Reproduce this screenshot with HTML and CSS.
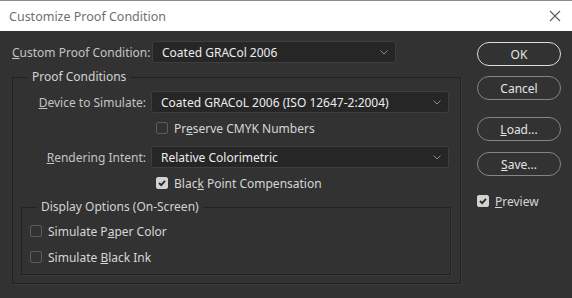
FILE: index.html
```html
<!DOCTYPE html>
<html lang="en">
<head>
    <meta charset="UTF-8">
    <title>Customize Proof Condition</title>
    <link rel="stylesheet" href="styles.css">
</head>
<body>
    <div class="dialog">
        <div class="titlebar">
            <span class="title">Customize Proof Condition</span>
            <svg class="close" width="12" height="12" viewBox="0 0 12 12">
                <path d="M1 1 L11 11 M11 1 L1 11" stroke="#5a5a5a" stroke-width="1.1" fill="none"/>
            </svg>
        </div>

        <div class="main">
            <div class="left">
                <div class="top-row">
                    <span class="label"><u>C</u>ustom Proof Condition:</span>
                    <div class="select select-top">
                        <span>Coated GRACol 2006</span>
                        <svg width="8" height="5" viewBox="0 0 8 5"><path d="M0.5 0.5 L4 4 L7.5 0.5" stroke="#8c8c8c" fill="none"/></svg>
                    </div>
                </div>

                <fieldset class="group outer">
                    <legend>Proof Conditions</legend>
                    <div class="form-grid">
                        <span class="label right"><u>D</u>evice to Simulate:</span>
                        <div class="select">
                            <span>Coated GRACoL 2006 (ISO 12647-2:2004)</span>
                            <svg width="8" height="5" viewBox="0 0 8 5"><path d="M0.5 0.5 L4 4 L7.5 0.5" stroke="#8c8c8c" fill="none"/></svg>
                        </div>
                        <span></span>
                        <label class="check check-row1"><span class="box"></span><span>Pr<u>e</u>serve CMYK Numbers</span></label>
                        <span class="label right"><u>R</u>endering Intent:</span>
                        <div class="select">
                            <span>Relative Colorimetric</span>
                            <svg width="8" height="5" viewBox="0 0 8 5"><path d="M0.5 0.5 L4 4 L7.5 0.5" stroke="#8c8c8c" fill="none"/></svg>
                        </div>
                        <span></span>
                        <label class="check check-row2"><span class="box checked"><svg width="10" height="10" viewBox="0 0 10 10"><path d="M2 5 L4.2 7.2 L8 2.8" stroke="#2b2b2b" stroke-width="1.8" fill="none"/></svg></span><span>Blac<u>k</u> Point Compensation</span></label>
                    </div>

                    <fieldset class="group inner">
                        <legend>Display Options (On-Screen)</legend>
                        <label class="check"><span class="box"></span><span>Simulate P<u>a</u>per Color</span></label>
                        <label class="check second"><span class="box"></span><span>Simulate <u>B</u>lack Ink</span></label>
                    </fieldset>
                </fieldset>
            </div>

            <div class="buttons">
                <button class="btn default">OK</button>
                <button class="btn cancel">Cancel</button>
                <button class="btn load"><u>L</u>oad...</button>
                <button class="btn save"><u>S</u>ave...</button>
                <label class="check preview"><span class="box checked"><svg width="10" height="10" viewBox="0 0 10 10"><path d="M2 5 L4.2 7.2 L8 2.8" stroke="#2b2b2b" stroke-width="1.8" fill="none"/></svg></span><span><u>P</u>review</span></label>
            </div>
        </div>
    </div>
</body>
</html>
```

FILE: styles.css
```css
body {
    margin: 0;
    background: #323232;
    font-family: "Noto Sans", "Open Sans", sans-serif;
    font-size: 12px;
    color: #cfcfcf;
}

.dialog {
    width: 572px;
    height: 298px;
    overflow: hidden;
}

.titlebar {
    height: 30px;
    background: #fff;
    border-top: 1px solid #8a8a8a;
    display: flex;
    align-items: center;
    justify-content: space-between;
    padding: 0 11px 0 9px;
}

.title {
    color: #6f6f6f;
    font-size: 12.5px;
}

.main {
    display: flex;
    padding-top: 10px;
}

.left {
    width: 461px;
    padding-left: 12px;
    box-sizing: border-box;
}

.top-row {
    display: flex;
    align-items: center;
    height: 22px;
    margin-bottom: 6px;
}

.label {
    color: #c4c4c4;
    white-space: nowrap;
}

.top-row .label {
    width: 140px;
}

.right {
    text-align: right;
}

.select {
    height: 22px;
    box-sizing: border-box;
    background: #262626;
    border: 1px solid #3e3e3e;
    border-radius: 3px;
    display: flex;
    align-items: center;
    justify-content: space-between;
    padding: 0 7px 0 9px;
    color: #ececec;
}

.select-top {
    width: 244px;
}

.group {
    margin: 0;
    padding: 0;
    border: 1px solid #222;
    box-shadow: 1px 1px 0 #3a3a3a;
}

.group legend {
    padding: 0 4px;
    margin-left: 15px;
    color: #d2d2d2;
    line-height: 16px;
}

.outer {
    padding-top: 6px;
    padding-bottom: 8px;
}

.form-grid {
    display: grid;
    grid-template-columns: 133px 298px;
    column-gap: 5px;
    align-items: center;
}

.check {
    display: flex;
    align-items: center;
    height: 12px;
    color: #d6d6d6;
    white-space: nowrap;
}

.check-row1 {
    margin: 9px 0 12px 5px;
}

.check-row2 {
    margin: 9px 0 10px 5px;
}

.box {
    width: 12px;
    height: 12px;
    box-sizing: border-box;
    border: 1px solid #5c5c5c;
    border-radius: 2px;
    margin-right: 6px;
    display: flex;
    align-items: center;
    justify-content: center;
}

.box.checked {
    background: #d2d2d2;
    border-color: #d2d2d2;
}

.inner {
    margin: 0 9px 0 8px;
    padding: 10px 8px 11px 8px;
}

.inner legend {
    margin-left: 7px;
}

.inner .second {
    margin-top: 14px;
}

.buttons {
    display: flex;
    flex-direction: column;
    margin-left: 16px;
    padding-top: 1px;
}

.btn {
    width: 84px;
    height: 24px;
    border-radius: 12px;
    background: transparent;
    border: 1px solid #858585;
    color: #e4e4e4;
    font-family: inherit;
    font-size: 12px;
    padding: 0;
}

.btn.default {
    border: 1.5px solid #dcdcdc;
}

.cancel {
    margin-top: 10px;
}

.load {
    margin-top: 17px;
}

.save {
    margin-top: 11px;
}

.preview {
    margin-top: 19px;
}
```
